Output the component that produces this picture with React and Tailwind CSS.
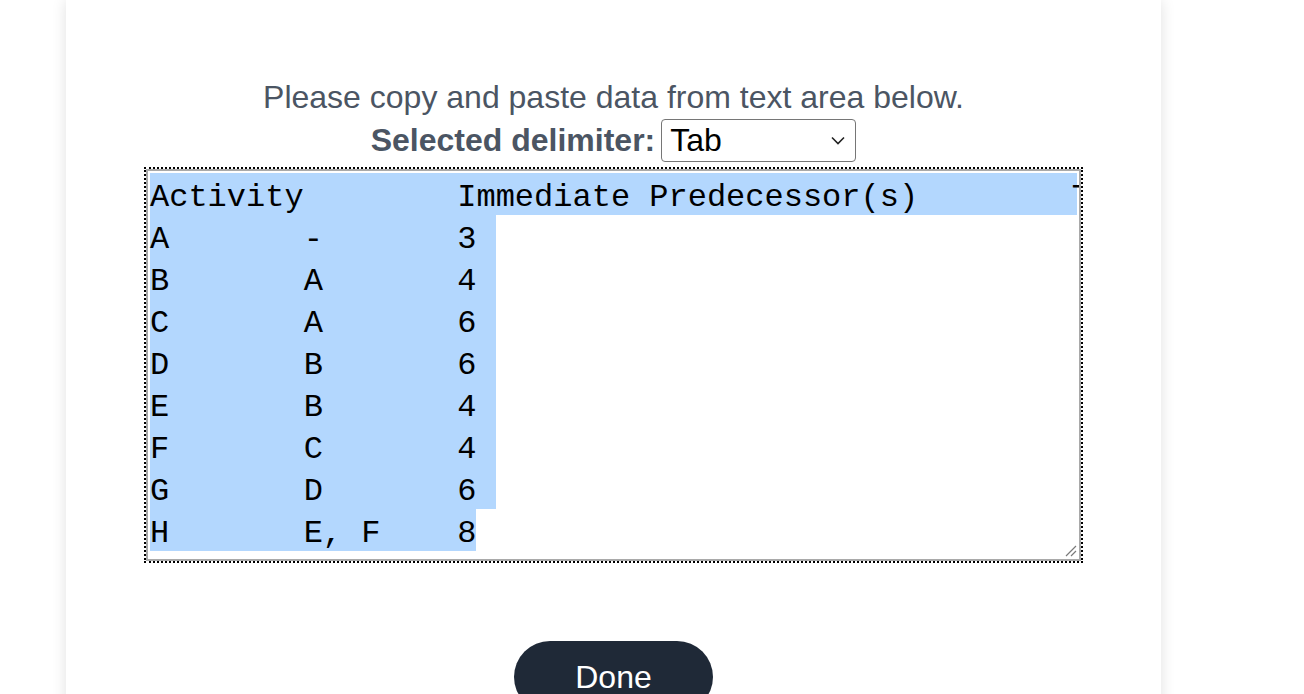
const rows = [
  ['A', '-', '3'],
  ['B', 'A', '4'],
  ['C', 'A', '6'],
  ['D', 'B', '6'],
  ['E', 'B', '4'],
  ['F', 'C', '4'],
  ['G', 'D', '6'],
  ['H', 'E, F', '8'],
];

function PasteArea() {
  return (
    <div className="mx-auto w-[939px] border-2 border-dotted border-black">
      <div className="h-[392px] overflow-hidden border-2 border-[#a9a9a9] p-[2px] relative">
        <div
          className="whitespace-pre text-[32px] text-black"
          style={{ fontFamily: '"Liberation Mono", "Courier New", monospace', tabSize: 8 }}
        >
          <div className="h-[42px] leading-[50px] bg-[#b3d7fe]">{'Activity\tImmediate Predecessor(s)\tTime'}</div>
          {rows.map((r, i) => (
            <div key={r[0]} className="h-[42px] w-max leading-[50px] bg-[#b3d7fe]">
              {`${r[0]}\t${r[1]}\t${r[2]}` + (i < rows.length - 1 ? ' ' : '')}
            </div>
          ))}
        </div>
        {/* resize grip */}
        <svg className="absolute right-[2px] bottom-[2px]" width="14" height="14" viewBox="0 0 14 14">
          <path d="M13 3 L3 13 M13 8 L8 13" stroke="#7a7a7a" strokeWidth="1.2" />
        </svg>
      </div>
    </div>
  );
}

export default function App() {
  return (
    <div className="min-h-[694px] bg-white" style={{ fontFamily: '"Liberation Sans", Arial, sans-serif' }}>
      <div className="ml-[66px] w-[1095px] min-h-[694px] bg-white shadow-[0_0_14px_rgba(0,0,0,0.12)] pt-[76px]">
        <div className="text-center text-[32px] leading-[43px] text-[#4b5563]">
          <p>Please copy and paste data from text area below.</p>
          <div className="flex items-center justify-center gap-[6px]">
            <span className="font-bold">Selected delimiter:</span>
            <div className="flex h-[43px] w-[195px] items-center justify-between rounded-[4px] border border-[#767676] bg-white pl-[8px] pr-[10px] text-black">
              <span>Tab</span>
              <svg width="14" height="9" viewBox="0 0 14 9" fill="none">
                <path d="M1 1.5 L7 7.5 L13 1.5" stroke="#222" strokeWidth="1.6" />
              </svg>
            </div>
          </div>
        </div>
        <div className="mt-[5px]">
          <PasteArea />
        </div>
        <div className="mt-[78px] flex justify-center">
          <button className="h-[72px] w-[199px] rounded-full bg-[#1f2937] text-[32px] text-white">
            Done
          </button>
        </div>
      </div>
    </div>
  );
}
